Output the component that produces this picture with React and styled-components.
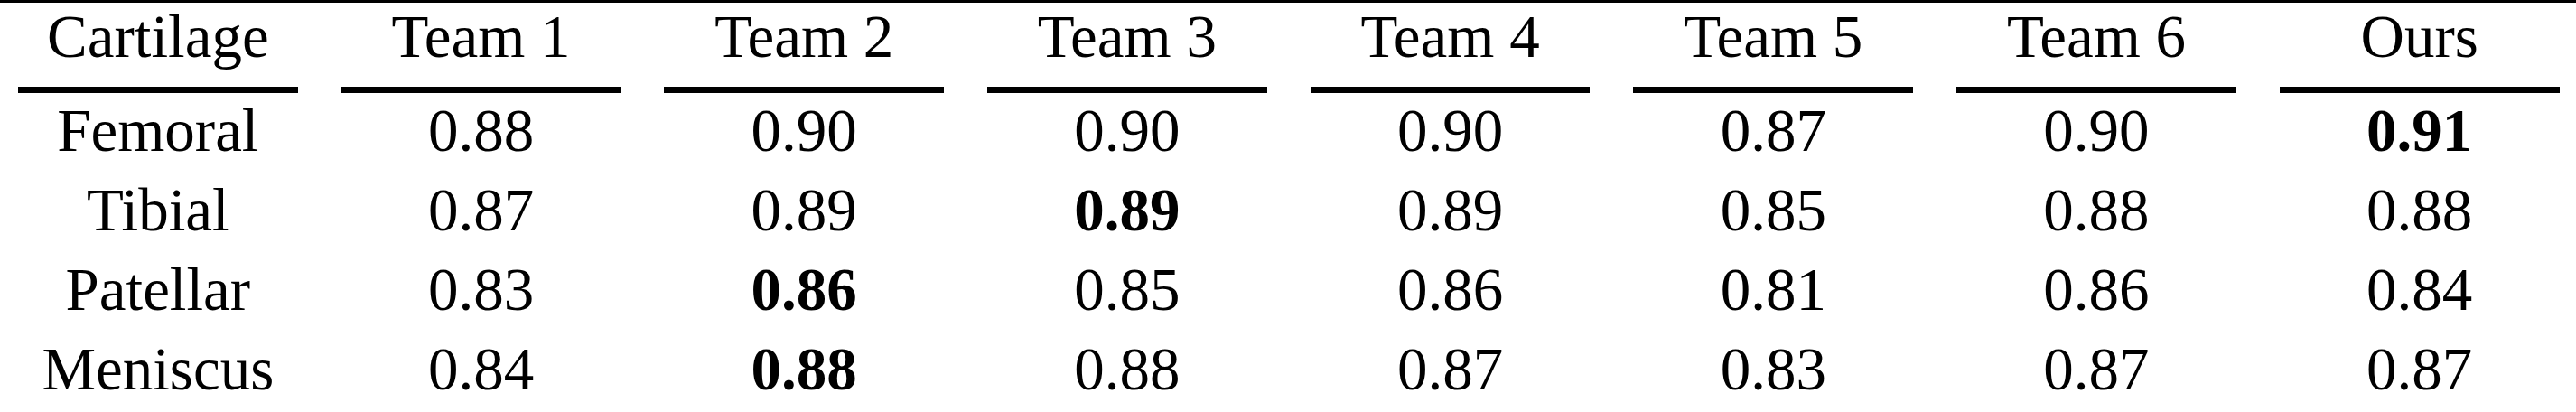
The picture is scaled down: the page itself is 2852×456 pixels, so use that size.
import React from 'react';
import styled, {createGlobalStyle} from 'styled-components';

const GlobalStyle = createGlobalStyle`
    html, body {
        margin: 0;
        padding: 0;
        background: #fff;
    }
    body {
        font-family: "Liberation Serif", "Times New Roman", serif;
        color: #000;
        overflow: hidden;
    }
`;

const Wrapper = styled.div`
    width: 2852px;
    height: 456px;
    overflow: hidden;
    border-top: 3px solid #000;
    box-sizing: border-box;
`;

const Grid = styled.div`
    display: grid;
    grid-template-columns: repeat(8, 357.7px);
    margin-left: -4px;
    font-size: 67px;
`;

const HeadCell = styled.div`
    margin: 0 24px;
    padding-bottom: 18px;
    border-bottom: 7px solid #000;
    line-height: 75px;
    text-align: center;
    white-space: nowrap;
`;

const Body = styled.div`
    grid-column: 1 / -1;
    display: grid;
    grid-template-columns: subgrid;
    margin-top: -3px;
`;

const Cell = styled.div`
    line-height: 88px;
    text-align: center;
    white-space: nowrap;
    font-weight: ${props => (props.$best ? 700 : 400)};
`;

const columns = ['Cartilage', 'Team 1', 'Team 2', 'Team 3', 'Team 4', 'Team 5', 'Team 6', 'Ours'];

const rows = [
    {name: 'Femoral', values: ['0.88', '0.90', '0.90', '0.90', '0.87', '0.90', '0.91'], best: 6},
    {name: 'Tibial', values: ['0.87', '0.89', '0.89', '0.89', '0.85', '0.88', '0.88'], best: 2},
    {name: 'Patellar', values: ['0.83', '0.86', '0.85', '0.86', '0.81', '0.86', '0.84'], best: 1},
    {name: 'Meniscus', values: ['0.84', '0.88', '0.88', '0.87', '0.83', '0.87', '0.87'], best: 1},
];

const App = () => {
    return (
        <Wrapper>
            <GlobalStyle/>
            <Grid>
                {columns.map(col => (
                    <HeadCell key={col}>{col}</HeadCell>
                ))}
                <Body>
                    {rows.map(row => (
                        <React.Fragment key={row.name}>
                            <Cell>{row.name}</Cell>
                            {row.values.map((v, i) => (
                                <Cell key={i} $best={i === row.best}>{v}</Cell>
                            ))}
                        </React.Fragment>
                    ))}
                </Body>
            </Grid>
        </Wrapper>
    );
};

export default App;
